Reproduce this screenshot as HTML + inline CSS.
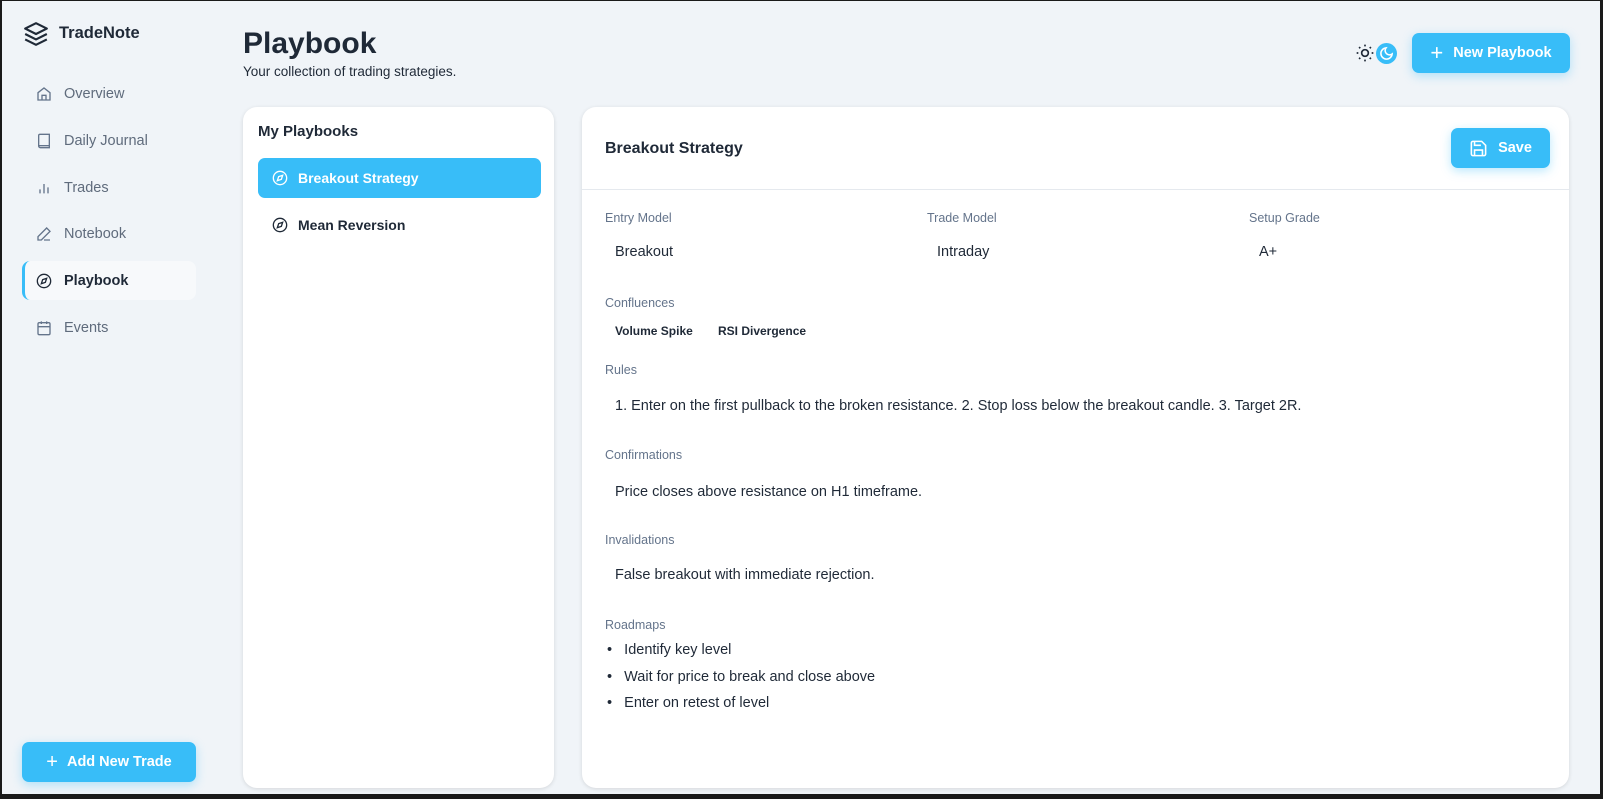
<!DOCTYPE html>
<html><head><meta charset="utf-8"><style>
*{box-sizing:border-box;margin:0;padding:0}
body{width:1603px;height:799px;background:#1a1a1a;font-family:"Liberation Sans",sans-serif;overflow:hidden;position:relative}
#app{position:absolute;left:2px;top:1px;width:1598px;height:793px;background:#f0f4f8}
.a{position:absolute;white-space:nowrap}
.nav{position:absolute;left:20px;width:174px;height:39px;color:#5f6b7c;font-size:14.5px;display:flex;align-items:center;padding-left:14px}
.nav svg{margin-right:12px}
.nav.act{background:#f7f9fb;color:#1f2937;font-weight:bold;border-left:3px solid #38bdf8;border-radius:8px;padding-left:11px}
.card{position:absolute;background:#fff;border-radius:14px;box-shadow:0 1px 4px rgba(0,0,0,.12)}
.btn{position:absolute;background:#38bdf8;color:#fff;font-weight:bold;font-size:14.5px;border-radius:7px;display:flex;align-items:center;justify-content:center;box-shadow:0 3px 10px rgba(56,189,248,.35)}
.lbl{color:#64748b;font-size:12.5px}
.val{color:#1f2937;font-size:14.5px}
</style></head><body><div id="app">
<svg class="a" style="left:21px;top:20px" width="26" height="26" viewBox="0 0 24 24" fill="none" stroke="#1f2937" stroke-width="2" stroke-linejoin="round"><path d="M12 2 2 7l10 5 10-5z"/><path d="m2 12 10 5 10-5"/><path d="m2 17 10 5 10-5"/></svg>
<div class="a" style="left:57px;top:23px;font-size:16.5px;font-weight:bold;color:#1f2937">TradeNote</div>

<div class="nav" style="top:73px"><svg width="16" height="16" viewBox="0 0 24 24" fill="none" stroke="#64748b" stroke-width="2"><path d="M3 10 12 3l9 7v11H3z"/><path d="M9 21v-7h6v7"/></svg>Overview</div>
<div class="nav" style="top:120px"><svg width="16" height="16" viewBox="0 0 24 24" fill="none" stroke="#64748b" stroke-width="2"><path d="M4 19.5V4a2 2 0 0 1 2-2h14v20H6.5A2.5 2.5 0 0 1 4 19.5zM4 19h16"/></svg>Daily Journal</div>
<div class="nav" style="top:167px"><svg width="16" height="16" viewBox="0 0 24 24" fill="none" stroke="#64748b" stroke-width="2"><path d="M6 20v-6M12 20V6M18 20v-9"/></svg>Trades</div>
<div class="nav" style="top:213px"><svg width="16" height="16" viewBox="0 0 24 24" fill="none" stroke="#64748b" stroke-width="2"><path d="M16 3l5 5L8 21H3v-5zM12 21h9"/></svg>Notebook</div>
<div class="nav act" style="top:260px"><svg width="16" height="16" viewBox="0 0 24 24" fill="none" stroke="#1f2937" stroke-width="2"><circle cx="12" cy="12" r="10"/><path d="m16 8-2 6-6 2 2-6z"/></svg>Playbook</div>
<div class="nav" style="top:307px"><svg width="16" height="16" viewBox="0 0 24 24" fill="none" stroke="#64748b" stroke-width="2"><rect x="3" y="4" width="18" height="18" rx="2"/><path d="M16 2v4M8 2v4M3 10h18"/></svg>Events</div>

<div class="btn" style="left:20px;top:741px;width:174px;height:40px"><span style="font-size:20px;font-weight:normal;margin-right:9px">+</span>Add New Trade</div>

<div class="a" style="left:241px;top:26px;font-size:30px;font-weight:bold;color:#1f2937">Playbook</div>
<div class="a" style="left:241px;top:63px;font-size:13.5px;color:#1f2937">Your collection of trading strategies.</div>

<svg class="a" style="left:1353px;top:42px" width="20" height="20" viewBox="0 0 24 24" fill="none" stroke="#1f2937" stroke-width="2"><circle cx="12" cy="12" r="4"/><path d="M12 2v2M12 20v2M4.9 4.9l1.4 1.4M17.7 17.7l1.4 1.4M2 12h2M20 12h2M4.9 19.1l1.4-1.4M17.7 6.3l1.4-1.4"/></svg>
<div class="a" style="left:1374px;top:42px;width:21px;height:21px;border-radius:50%;background:#38bdf8"></div>
<svg class="a" style="left:1377px;top:45px" width="15" height="15" viewBox="0 0 24 24" fill="none" stroke="#fff" stroke-width="2.5"><path d="M21 12.8A9 9 0 1 1 11.2 3a7 7 0 0 0 9.8 9.8z"/></svg>
<div class="btn" style="left:1410px;top:32px;width:158px;height:40px"><span style="font-size:22px;font-weight:normal;margin-right:10px">+</span>New Playbook</div>

<div class="card" style="left:241px;top:106px;width:311px;height:681px">
<div class="a" style="left:15px;top:16px;font-size:15px;font-weight:bold;color:#1f2937">My Playbooks</div>
<div class="a" style="left:15px;top:51px;width:283px;height:40px;background:#38bdf8;border-radius:7px;color:#fff;font-weight:bold;font-size:14px;display:flex;align-items:center;padding-left:14px"><svg width="16" height="16" viewBox="0 0 24 24" fill="none" stroke="#fff" stroke-width="2" style="margin-right:10px"><circle cx="12" cy="12" r="10"/><path d="m16 8-2 6-6 2 2-6z"/></svg>Breakout Strategy</div>
<div class="a" style="left:15px;top:98px;height:40px;color:#1f2937;font-weight:bold;font-size:14px;display:flex;align-items:center;padding-left:14px"><svg width="16" height="16" viewBox="0 0 24 24" fill="none" stroke="#1f2937" stroke-width="2" style="margin-right:10px"><circle cx="12" cy="12" r="10"/><path d="m16 8-2 6-6 2 2-6z"/></svg>Mean Reversion</div>
</div>

<div class="card" style="left:580px;top:106px;width:987px;height:681px">
<div class="a" style="left:23px;top:33px;font-size:16px;font-weight:bold;color:#1f2937">Breakout Strategy</div>
<div class="btn" style="left:869px;top:21px;width:99px;height:40px"><svg width="19" height="19" viewBox="0 0 24 24" fill="none" stroke="#fff" stroke-width="2" style="margin-right:10px"><path d="M5 3h11l5 5v11a2 2 0 0 1-2 2H5a2 2 0 0 1-2-2V5a2 2 0 0 1 2-2z"/><path d="M7 3v5h8M7 21v-7h10v7"/></svg>Save</div>
<div class="a" style="left:0;top:82px;width:987px;height:1px;background:#e5e9ee"></div>

<div class="a lbl" style="left:23px;top:104px">Entry Model</div>
<div class="a lbl" style="left:345px;top:104px">Trade Model</div>
<div class="a lbl" style="left:667px;top:104px">Setup Grade</div>
<div class="a val" style="left:33px;top:137px">Breakout</div>
<div class="a val" style="left:355px;top:137px">Intraday</div>
<div class="a val" style="left:677px;top:137px">A+</div>

<div class="a lbl" style="left:23px;top:189px">Confluences</div>
<div class="a" style="left:33px;top:217px;font-size:12px;font-weight:bold;color:#1f2937">Volume Spike</div>
<div class="a" style="left:136px;top:217px;font-size:12px;font-weight:bold;color:#1f2937">RSI Divergence</div>

<div class="a lbl" style="left:23px;top:256px">Rules</div>
<div class="a val" style="left:33px;top:291px">1. Enter on the first pullback to the broken resistance. 2. Stop loss below the breakout candle. 3. Target 2R.</div>
<div class="a lbl" style="left:23px;top:341px">Confirmations</div>
<div class="a val" style="left:33px;top:377px">Price closes above resistance on H1 timeframe.</div>
<div class="a lbl" style="left:23px;top:426px">Invalidations</div>
<div class="a val" style="left:33px;top:460px">False breakout with immediate rejection.</div>
<div class="a lbl" style="left:23px;top:511px">Roadmaps</div>
<div class="a val" style="left:25px;top:535px">•&nbsp;&nbsp;&nbsp;Identify key level</div>
<div class="a val" style="left:25px;top:562px">•&nbsp;&nbsp;&nbsp;Wait for price to break and close above</div>
<div class="a val" style="left:25px;top:588px">•&nbsp;&nbsp;&nbsp;Enter on retest of level</div>
</div>
</div></body></html>
